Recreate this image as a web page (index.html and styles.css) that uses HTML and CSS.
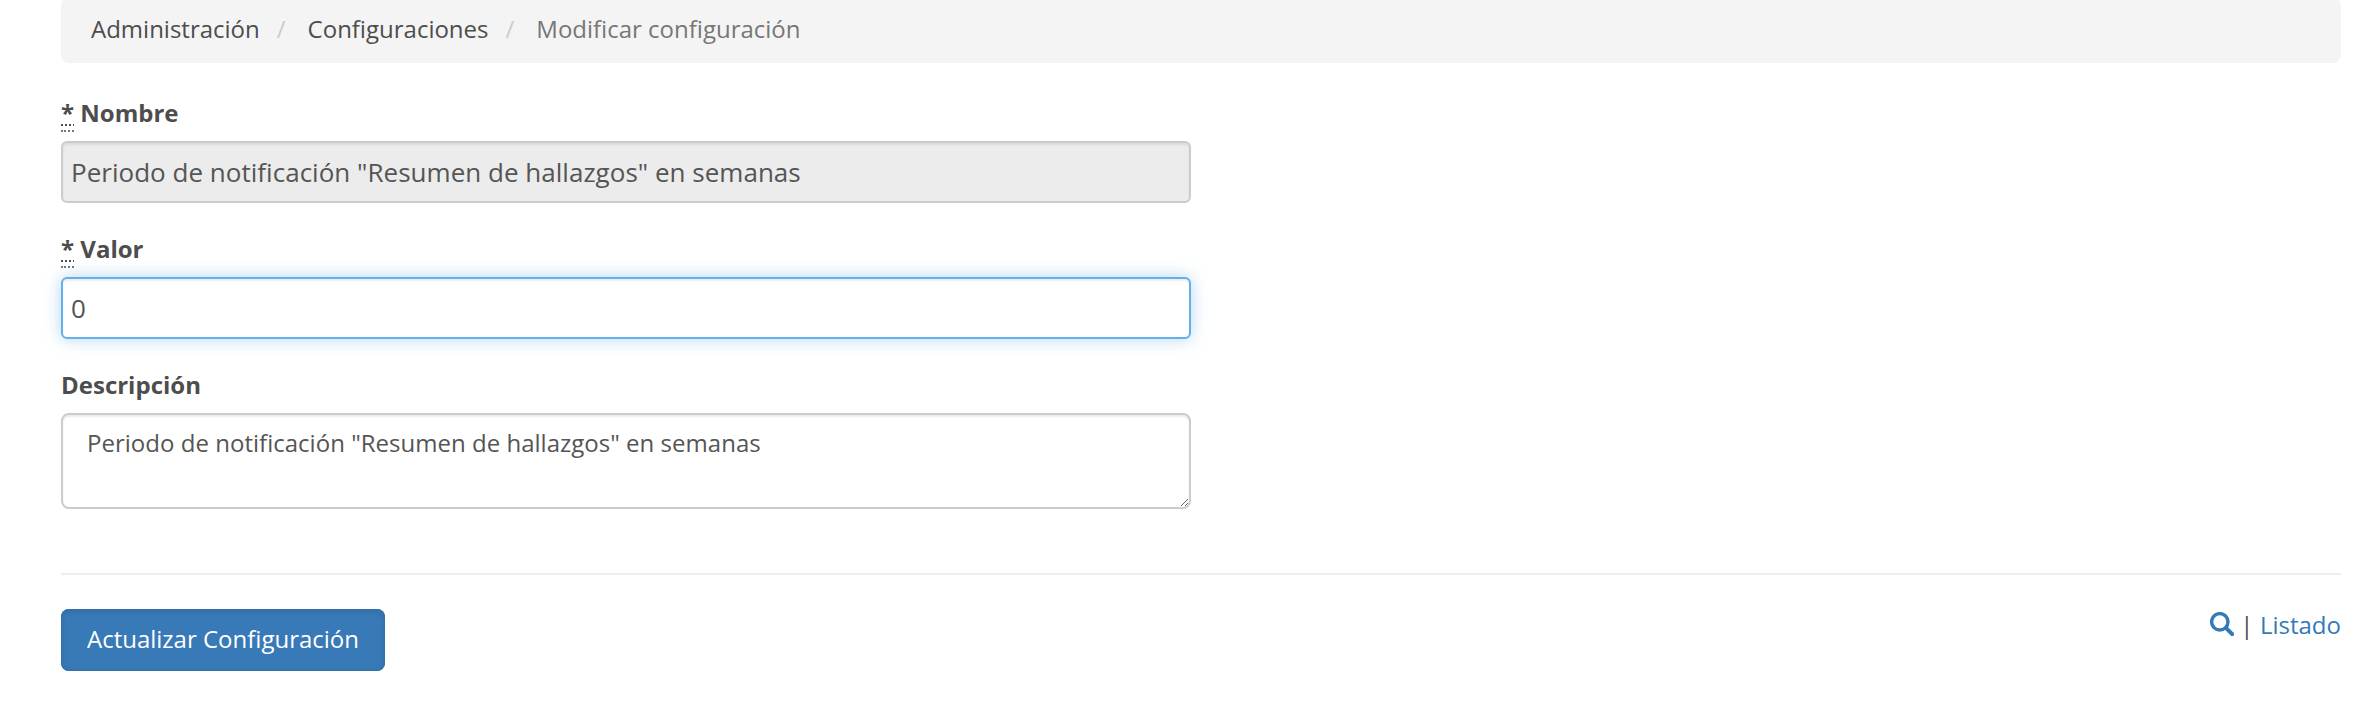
FILE: index.html
```html
<!DOCTYPE html>
<html lang="es">
<head>
<meta charset="utf-8">
<title>Modificar configuración</title>
<link rel="stylesheet" href="styles.css">
</head>
<body>
<main class="container">
  <ol class="breadcrumb">
    <li><a href="#">Administración</a></li>
    <li><a href="#">Configuraciones</a></li>
    <li class="active">Modificar configuración</li>
  </ol>
  <form class="form">
    <div class="form-group">
      <label for="nombre"><abbr title="requerido">*</abbr> Nombre</label>
      <input class="form-control" id="nombre" type="text" readonly value="Periodo de notificación &quot;Resumen de hallazgos&quot; en semanas">
    </div>
    <div class="form-group">
      <label for="valor"><abbr title="requerido">*</abbr> Valor</label>
      <input class="form-control focused" id="valor" type="text" value="0">
    </div>
    <div class="form-group">
      <label for="descripcion">Descripción</label>
      <textarea class="form-control area" id="descripcion">Periodo de notificación "Resumen de hallazgos" en semanas</textarea>
    </div>
  </form>
  <hr class="divider">
  <div class="actions">
    <button class="btn" type="button">Actualizar Configuración</button>
    <div class="links">
      <a class="search" href="#" aria-label="Buscar"><svg viewBox="0 0 24 24" width="24" height="24"><circle cx="9.8" cy="9.8" r="8.2" fill="none" stroke="currentColor" stroke-width="3.4"/><path d="M16 16l6.2 6.2" fill="none" stroke="currentColor" stroke-width="4" stroke-linecap="round"/></svg></a>
      <span class="separator">|</span>
      <a href="#">Listado</a>
    </div>
  </div>
</main>
</body>
</html>
```
FILE: styles.css
```css
* { box-sizing: border-box; }
body {
  margin: 0;
  background: #fff;
  color: #4d4d4d;
  font: 24px/34px "Open Sans", sans-serif;
  overflow: hidden;
}
a { color: #337ab7; text-decoration: none; }
.container { padding: 0 13px 0 61px; }
.breadcrumb {
  display: flex;
  height: 66px;
  margin: -3px 0 0;
  padding: 15px 30px;
  list-style: none;
  background: #f4f4f4;
  border-radius: 8px;
}
.breadcrumb a { color: #4d4d4d; }
.breadcrumb li + li::before {
  content: "/";
  padding: 0 22px 0 17px;
  color: #ccc;
}
.breadcrumb .active { color: #777; }
.form { width: 1130px; padding-top: 33px; }
.form-group { height: 136px; }
label {
  display: block;
  height: 45px;
  font-weight: 700;
}
abbr {
  display: inline-block;
  height: 36px;
  text-decoration: underline dotted 2px;
  text-underline-offset: 2px;
  border-bottom: 2px dotted #777;
}
.form-control {
  display: block;
  width: 100%;
  height: 62px;
  padding: 8px;
  border: 2px solid #ccc;
  border-radius: 6px;
  outline: 0;
  background: #fff;
  color: #555;
  font: 26px/38px "Open Sans", sans-serif;
  letter-spacing: .02px;
  box-shadow: inset 0 2px 2px rgba(0, 0, 0, .075);
}
.form-control:read-only { background: #ececec; }
.form-control.focused {
  border-color: #66afe9;
  box-shadow: inset 0 2px 2px rgba(0, 0, 0, .075), 0 0 16px rgba(102, 175, 233, .5);
}
.form-control.area {
  height: 96px;
  padding: 11px 24px;
  border-radius: 8px;
  font-size: 24px;
  line-height: 34px;
  resize: vertical;
  overflow: hidden;
}
.divider {
  height: 2px;
  margin: 69px 0 34px;
  border: 0;
  background: #eee;
}
.actions {
  display: flex;
  justify-content: space-between;
  align-items: flex-start;
}
.btn {
  width: 324px;
  height: 62px;
  padding: 0 0 2px;
  border: 0;
  border-radius: 8px;
  background: #3879b7;
  color: #fff;
  font: 24px/34px "Open Sans", sans-serif;
  box-shadow: inset 0 0 0 1px #3472a9, inset 0 2px 6px rgba(0, 0, 0, .125);
}
.links {
  display: flex;
  gap: 6.5px;
  margin-top: -1px;
}
.search svg { display: block; margin-top: 4px; }
```
